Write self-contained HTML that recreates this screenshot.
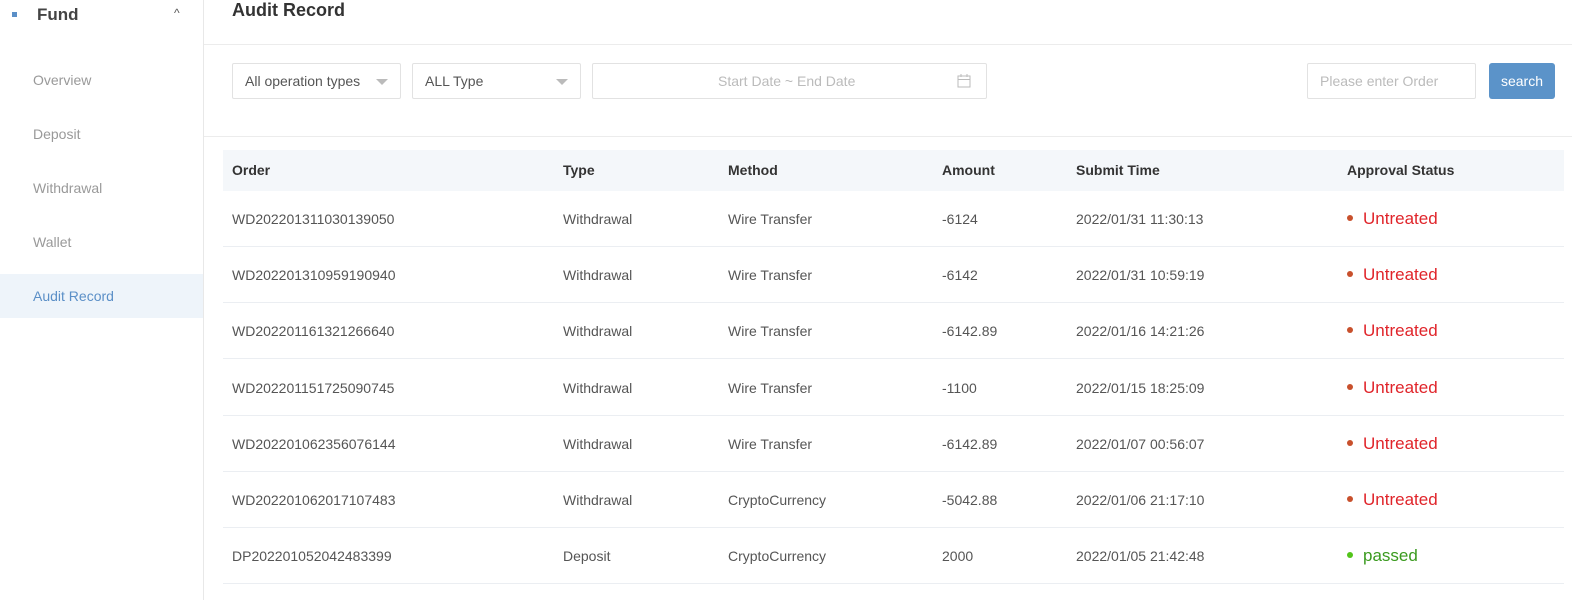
<!DOCTYPE html>
<html><head><meta charset="utf-8"><style>
*{margin:0;padding:0;box-sizing:border-box}
body{width:1572px;height:600px;overflow:hidden;background:#fff;font-family:"Liberation Sans",sans-serif;position:relative;color:#555}
.side{position:absolute;left:0;top:0;width:204px;height:600px;border-right:1px solid #e8e8e8}
.abs{position:absolute;white-space:nowrap}
.item{position:absolute;left:0;width:203px;height:44px;line-height:44px;padding-left:33px;font-size:14px;color:#999}
.sel{background:#eef4fa;color:#5b8fc7}
.box{position:absolute;top:63px;height:36px;border:1px solid #e2e2e2;border-radius:2px;font-size:14px;line-height:34px;padding-left:12px;color:#555}
.tri{position:absolute;top:15px;width:0;height:0;border-left:6px solid transparent;border-right:6px solid transparent;border-top:6px solid #bbb}
.th{position:absolute;left:223px;top:150px;width:1341px;height:41px;background:#f4f7fa}
.row{position:absolute;left:223px;width:1341px;height:56px;border-bottom:1px solid #ebeef2}
.c{position:absolute;font-size:14px;line-height:56px;color:#555}
.h{position:absolute;font-size:14px;font-weight:bold;line-height:41px;color:#333}
.st{font-size:17px}
.dot{display:inline-block;width:6px;height:6px;border-radius:3px;margin-right:10px;vertical-align:3px}
</style></head><body>
<div class="side">
<div class="abs" style="left:12px;top:12px;width:5px;height:5px;background:#5b8fc7"></div>
<div class="abs" style="left:37px;top:5px;font-size:17px;font-weight:bold;color:#444">Fund</div>
<div class="abs" style="left:174px;top:6px;font-size:12px;color:#555">&#94;</div>
<div class="item" style="top:58px">Overview</div>
<div class="item" style="top:112px">Deposit</div>
<div class="item" style="top:166px">Withdrawal</div>
<div class="item" style="top:220px">Wallet</div>
<div class="item sel" style="top:274px">Audit Record</div>
</div>
<div class="abs" style="left:232px;top:0px;font-size:18px;font-weight:bold;color:#333">Audit Record</div>
<div class="abs" style="left:204px;top:44px;width:1368px;height:1px;background:#ececec"></div>
<div class="box" style="left:232px;width:169px">All operation types<div class="tri" style="left:143px"></div></div>
<div class="box" style="left:412px;width:169px">ALL Type<div class="tri" style="left:143px"></div></div>
<div class="box" style="left:592px;width:395px;color:#bbb;padding-left:125px">Start Date ~ End Date
<svg style="position:absolute;left:364px;top:10px" width="14" height="14" viewBox="0 0 14 14"><rect x="1" y="2" width="12" height="11" fill="none" stroke="#bbb"/><line x1="1" y1="5.5" x2="13" y2="5.5" stroke="#bbb"/><line x1="4" y1="0" x2="4" y2="3" stroke="#bbb"/><line x1="10" y1="0" x2="10" y2="3" stroke="#bbb"/></svg></div>
<div class="box" style="left:1307px;width:169px;color:#bbb">Please enter Order</div>
<div class="abs" style="left:1489px;top:63px;width:66px;height:36px;background:#5b93c9;border-radius:3px;color:#fff;font-size:14px;line-height:36px;text-align:center">search</div>
<div class="abs" style="left:204px;top:136px;width:1368px;height:1px;background:#ececec"></div>
<div class="th">
<div class="h" style="left:9px">Order</div><div class="h" style="left:340px">Type</div><div class="h" style="left:505px">Method</div><div class="h" style="left:719px">Amount</div><div class="h" style="left:853px">Submit Time</div><div class="h" style="left:1124px">Approval Status</div>
</div>
<div id="rows"></div>
<script>
var d=[["WD202201311030139050","Withdrawal","Wire Transfer","-6124","2022/01/31 11:30:13",0],
["WD202201310959190940","Withdrawal","Wire Transfer","-6142","2022/01/31 10:59:19",0],
["WD202201161321266640","Withdrawal","Wire Transfer","-6142.89","2022/01/16 14:21:26",0],
["WD202201151725090745","Withdrawal","Wire Transfer","-1100","2022/01/15 18:25:09",0],
["WD202201062356076144","Withdrawal","Wire Transfer","-6142.89","2022/01/07 00:56:07",0],
["WD202201062017107483","Withdrawal","CryptoCurrency","-5042.88","2022/01/06 21:17:10",0],
["DP202201052042483399","Deposit","CryptoCurrency","2000","2022/01/05 21:42:48",1]];
var x=[9,340,505,719,853],h="";
d.forEach(function(r,i){h+='<div class="row" style="top:'+(191+i*56.2)+'px">';
for(var j=0;j<5;j++)h+='<div class="c" style="left:'+x[j]+'px">'+r[j]+'</div>';
h+=r[5]?'<div class="c st" style="left:1124px;color:#3a9a1e"><span class="dot" style="background:#52c41a"></span>passed</div>':'<div class="c st" style="left:1124px;color:#e0242a"><span class="dot" style="background:#c8502c"></span>Untreated</div>';
h+='</div>';});
document.getElementById('rows').innerHTML=h;
</script>
</body></html>
